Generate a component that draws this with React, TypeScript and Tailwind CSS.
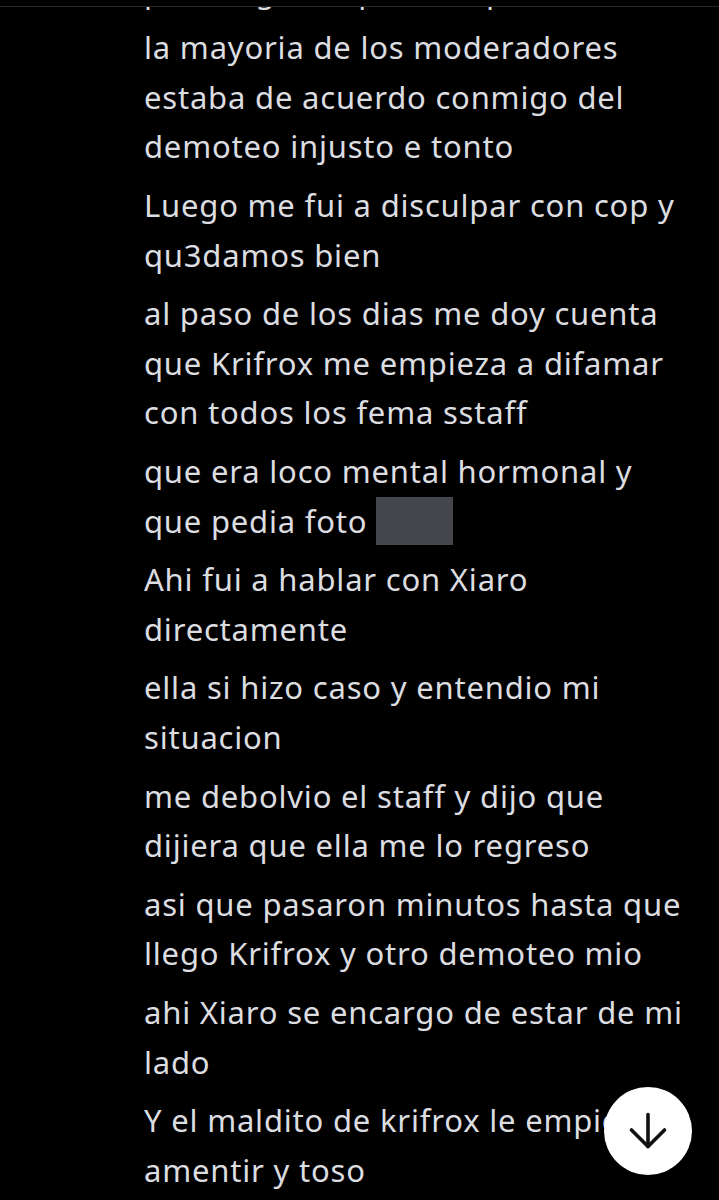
import React from "react";

const messages: React.ReactNode[][] = [
  ["la mayoria de los moderadores", "estaba de acuerdo conmigo del", "demoteo injusto e tonto"],
  ["Luego me fui a disculpar con cop y", "qu3damos bien"],
  ["al paso de los dias me doy cuenta", "que Krifrox me empieza a difamar", "con todos los fema sstaff"],
  [
    "que era loco mental hormonal y",
    <>
      que pedia foto{" "}
      <span className="inline-block w-[77px] h-[48px] bg-[#45464d] align-[-12px]" />
    </>,
  ],
  ["Ahi fui a hablar con Xiaro", "directamente"],
  ["ella si hizo caso y entendio mi", "situacion"],
  ["me debolvio el staff y dijo que", "dijiera que ella me lo regreso"],
  ["asi que pasaron minutos hasta que", "llego Krifrox y otro demoteo mio"],
  ["ahi Xiaro se encargo de estar de mi", "lado"],
  ["Y el maldito de krifrox le empieza", "amentir y toso"],
];

export default function App() {
  return (
    <div
      className="relative w-[719px] h-[1200px] bg-black overflow-hidden text-[#dcdde0]"
      style={{ fontFamily: '"Noto Sans", sans-serif' }}
    >
      <div className="h-[6px] bg-black" />
      <div className="h-px bg-[#27272b]" />
      <div className="h-[1193px] overflow-hidden pl-[144px] pr-[10px] text-[31px] leading-[49.7px] tracking-[0.8px] whitespace-nowrap">
        <div className="-mt-[40.4px]">pedi la guia a pero lo que</div>
        <div className="mt-[6.6px] flex flex-col gap-[8.8px]">
          {messages.map((lines, i) => (
            <div key={i} className="flex flex-col">
              {lines.map((l, j) => (
                <div key={j}>{l}</div>
              ))}
            </div>
          ))}
        </div>
      </div>
      <button className="absolute right-[27px] bottom-[25px] w-[88px] h-[88px] rounded-full bg-white flex items-center justify-center">
        <svg width="40" height="40" viewBox="0 0 40 40" fill="none" stroke="#111" strokeWidth="3.6" strokeLinecap="round" strokeLinejoin="round">
          <path d="M20 3.5v32" />
          <path d="M3.5 19l16.5 16.5L36.5 19" />
        </svg>
      </button>
    </div>
  );
}
